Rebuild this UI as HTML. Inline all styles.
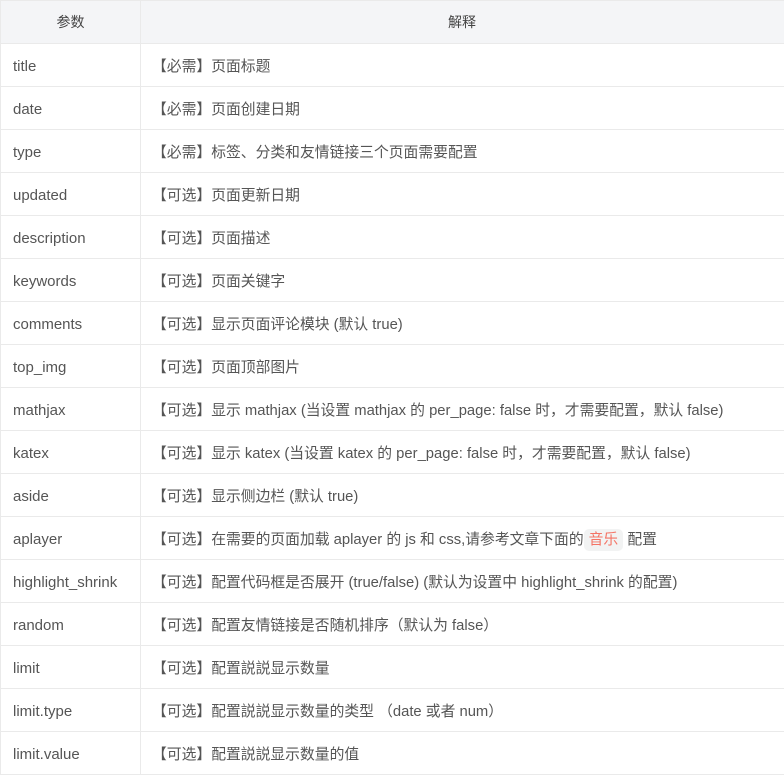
<!DOCTYPE html>
<html><head><meta charset="utf-8"><style>
body{margin:0;background:#fff;font-family:"Liberation Sans","Noto Sans CJK SC",sans-serif;font-size:15px;color:#555;}
table{border-collapse:collapse;position:absolute;left:0;top:0;width:800px;table-layout:fixed}
td,th{border:1px solid #eaeaea;height:42px;padding:0 0 0 12px;text-align:left;white-space:nowrap;overflow:hidden;line-height:20px;vertical-align:middle}
td span{display:inline-block;line-height:20px;vertical-align:middle;position:relative;top:2px}
th{background:#f4f5f7;font-weight:normal;text-align:center;padding:0;color:#444;font-size:14px}
td:nth-child(2){padding-left:11px;font-size:14.8px}
code{background:#f2f3f3;color:#f47466;font-family:inherit;padding:3px 5px;border-radius:5px}
</style></head><body>
<table>
<colgroup><col style="width:140px"><col></colgroup>
<tr><th>参数</th><th style="text-align:left;padding-left:307px">解释</th></tr>
<tr><td><span>title</span></td><td><span>【必需】页面标题</span></td></tr>
<tr><td><span>date</span></td><td><span>【必需】页面创建日期</span></td></tr>
<tr><td><span>type</span></td><td><span>【必需】标签、分类和友情链接三个页面需要配置</span></td></tr>
<tr><td><span>updated</span></td><td><span>【可选】页面更新日期</span></td></tr>
<tr><td><span>description</span></td><td><span>【可选】页面描述</span></td></tr>
<tr><td><span>keywords</span></td><td><span>【可选】页面关键字</span></td></tr>
<tr><td><span>comments</span></td><td><span>【可选】显示页面评论模块 (默认 true)</span></td></tr>
<tr><td><span>top_img</span></td><td><span>【可选】页面顶部图片</span></td></tr>
<tr><td><span>mathjax</span></td><td><span>【可选】显示 mathjax (当设置 mathjax 的 per_page: false 时，才需要配置，默认 false)</span></td></tr>
<tr><td><span>katex</span></td><td><span>【可选】显示 katex (当设置 katex 的 per_page: false 时，才需要配置，默认 false)</span></td></tr>
<tr><td><span>aside</span></td><td><span>【可选】显示侧边栏 (默认 true)</span></td></tr>
<tr><td><span>aplayer</span></td><td><span>【可选】在需要的页面加载 aplayer 的 js 和 css,请参考文章下面的<code>音乐</code> 配置</span></td></tr>
<tr><td><span>highlight_shrink</span></td><td><span>【可选】配置代码框是否展开 (true/false) (默认为设置中 highlight_shrink 的配置)</span></td></tr>
<tr><td><span>random</span></td><td><span>【可选】配置友情链接是否随机排序（默认为 false）</span></td></tr>
<tr><td><span>limit</span></td><td><span>【可选】配置説説显示数量</span></td></tr>
<tr><td><span>limit.type</span></td><td><span>【可选】配置説説显示数量的类型 （date 或者 num）</span></td></tr>
<tr><td><span>limit.value</span></td><td><span>【可选】配置説説显示数量的值</span></td></tr>
</table>
</body></html>
